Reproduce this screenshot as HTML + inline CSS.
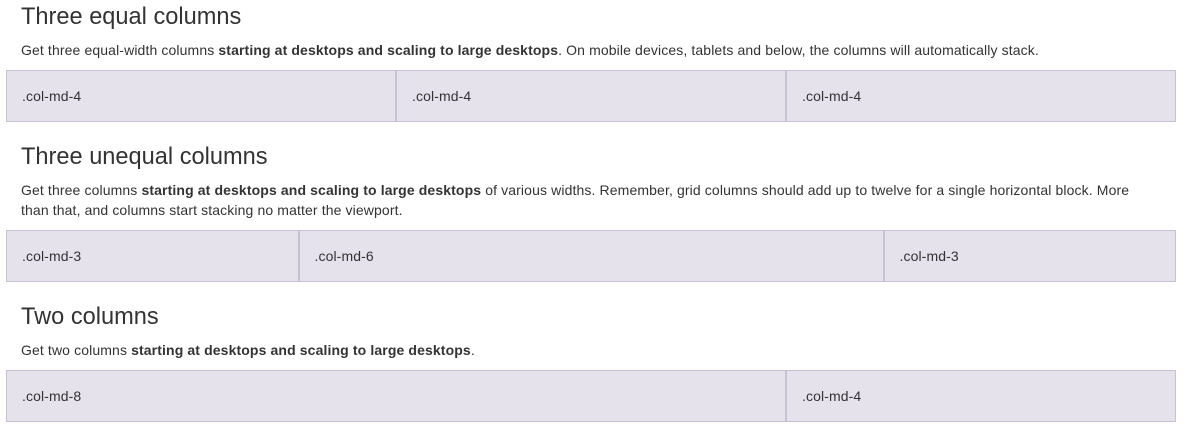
<!DOCTYPE html>
<html><head><style>
body{margin:0;padding:0 17px 0 6px;font-family:"Liberation Sans",sans-serif;font-size:14px;line-height:20px;color:#333;background:#fff;width:1170px}
h3{font-size:23.6px;font-weight:500;line-height:26.4px;margin:20px 0 10px 15px;}
p{margin:0 0 10px 15px;padding-right:15px;letter-spacing:0.12px}
.row{display:flex;}
.row div{box-sizing:border-box;padding:15px;background:rgba(86,61,124,.15);border:1px solid rgba(86,61,124,.2);letter-spacing:0.1px}
</style></head><body>
<h3 style="margin-top:4px">Three equal columns</h3>
<p>Get three equal-width columns <b>starting at desktops and scaling to large desktops</b>. On mobile devices, tablets and below, the columns will automatically stack.</p>
<div class="row"><div style="width:390px">.col-md-4</div><div style="width:390px">.col-md-4</div><div style="width:390px">.col-md-4</div></div>
<h3 style="margin-top:22px;margin-bottom:9px">Three unequal columns</h3>
<p>Get three columns <b>starting at desktops and scaling to large desktops</b> of various widths. Remember, grid columns should add up to twelve for a single horizontal block. More<br>than that, and columns start stacking no matter the viewport.</p>
<div class="row" style="margin-top:0px"><div style="width:292.5px">.col-md-3</div><div style="width:585px">.col-md-6</div><div style="width:292.5px">.col-md-3</div></div>
<h3 style="margin-top:22px">Two columns</h3>
<p>Get two columns <b>starting at desktops and scaling to large desktops</b>.</p>
<div class="row" style="margin-top:9px"><div style="width:780px">.col-md-8</div><div style="width:390px">.col-md-4</div></div>
</body></html>
